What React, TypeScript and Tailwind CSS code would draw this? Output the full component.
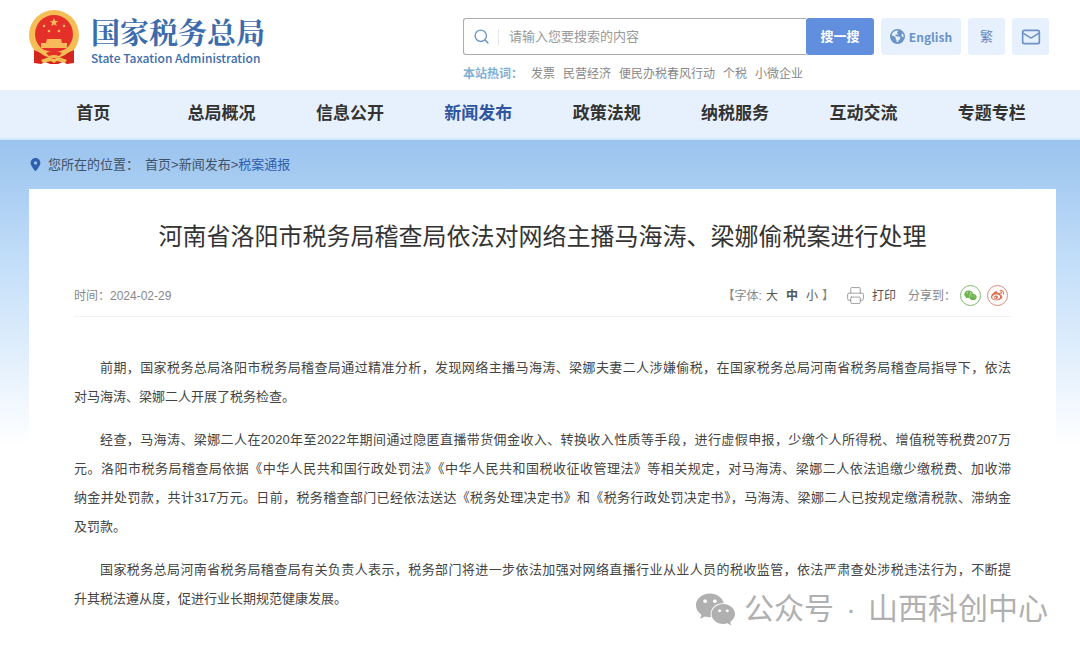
import { FaWeibo, FaWeixin } from "react-icons/fa";
import { FaEarthAmericas, FaLocationDot } from "react-icons/fa6";
import { Mail, Printer, Search } from "lucide-react";

const navItems = ["首页", "总局概况", "信息公开", "新闻发布", "政策法规", "纳税服务", "互动交流", "专题专栏"];

const hotWords = ["发票", "民营经济", "便民办税春风行动", "个税", "小微企业"];

const paragraphs = [
  [
    "前期，国家税务总局洛阳市税务局稽查局通过精准分析，发现网络主播马海涛、梁娜夫妻二人涉嫌偷税，在国家税务总局河南省税务局稽查局指导下，依法",
    "对马海涛、梁娜二人开展了税务检查。",
  ],
  [
    "经查，马海涛、梁娜二人在2020年至2022年期间通过隐匿直播带货佣金收入、转换收入性质等手段，进行虚假申报，少缴个人所得税、增值税等税费207万",
    "元。洛阳市税务局稽查局依据《中华人民共和国行政处罚法》《中华人民共和国税收征收管理法》等相关规定，对马海涛、梁娜二人依法追缴少缴税费、加收滞",
    "纳金并处罚款，共计317万元。日前，税务稽查部门已经依法送达《税务处理决定书》和《税务行政处罚决定书》，马海涛、梁娜二人已按规定缴清税款、滞纳金",
    "及罚款。",
  ],
  [
    "国家税务总局河南省税务局稽查局有关负责人表示，税务部门将进一步依法加强对网络直播行业从业人员的税收监管，依法严肃查处涉税违法行为，不断提",
    "升其税法遵从度，促进行业长期规范健康发展。",
  ],
];

function Emblem() {
  return (
    <svg viewBox="0 0 50 54" className="h-[54px] w-[50px] shrink-0" aria-hidden="true">
      <circle cx="25" cy="25" r="25" fill="#f5bd55" />
      <path d="M5 40l9 4h22l9-4v13l-7 1-4-2-5 2h-8l-5-2-4 2-7-1z" fill="#d3261f" />
      <circle cx="25" cy="24" r="19" fill="#e5302a" />
      <path d="M25 8l1.2 2.9 3.1.2-2.4 2 .8 3-2.7-1.7-2.7 1.7.8-3-2.4-2 3.1-.2z" fill="#f7b95a" />
      <g fill="#f7b95a">
        <circle cx="15" cy="16" r="1.3" />
        <circle cx="35" cy="16" r="1.3" />
        <circle cx="20" cy="21" r="1.3" />
        <circle cx="30" cy="21" r="1.3" />
        <path d="M18 29h14l1 4h5v5H12v-5h5z" />
      </g>
      <path d="M7 35q9 7 18 7t18-7l-3 7q-7 6-15 6t-15-6z" fill="#f5bd55" />
      <path d="M17 43q8-4 16 0l-3 3q-5-2-10 0z" fill="#e5302a" />
      <path d="M12 50l8-3 5 2 5-2 8 3-2 3-8-2-3 2-3-2-8 2z" fill="#f5bd55" />
    </svg>
  );
}

function Header() {
  return (
    <header className="flex h-[90px] items-start justify-between pr-[31px] pl-[29px]">
      <a href="#" className="flex items-start gap-3 pt-[10px] text-[#3c6cad]">
        <Emblem />
        <span className="flex flex-col pt-1">
          <span className="font-['Noto_Serif_CJK_SC','Noto_Sans_CJK_SC',serif] text-[29px] leading-9 font-bold">国家税务总局</span>
          <span className="font-['Noto_Sans_CJK_SC',sans-serif] text-[12px] leading-4 font-medium">State Taxation Administration</span>
        </span>
      </a>

      <div className="pt-[18px]">
        <div className="flex gap-[7px]">
          <form className="flex h-[37px]" onSubmit={(e) => e.preventDefault()}>
            <label className="flex w-[343px] items-center rounded-l-[3px] border border-r-0 border-[#a9adb2] pl-[9px]">
              <Search size={17} strokeWidth={2} className="text-[#6c9ac8]" />
              <span className="ml-2 h-4 w-px bg-[#e4e8ec]" />
              <input
                type="text"
                aria-label="搜索"
                placeholder="请输入您要搜索的内容"
                className="min-w-0 flex-1 pl-[10px] text-[13px] outline-none placeholder:text-[#999]"
              />
            </label>
            <button type="submit" className="w-[68px] rounded-[3px] bg-[#628fdd] text-[13px] font-bold text-white">
              搜一搜
            </button>
          </form>
          <a
            href="#"
            className="flex h-[37px] w-[80px] items-center justify-center gap-1 rounded-[3px] bg-[#e7f1fd] font-['Noto_Sans_CJK_SC',sans-serif] text-[12px] font-bold text-[#6a93c8]"
          >
            <FaEarthAmericas size={15} />
            English
          </a>
          <a href="#" className="flex h-[37px] w-[37px] items-center justify-center rounded-[3px] bg-[#e7f1fd] text-[13px] text-[#6a87bd]">
            繁
          </a>
          <a href="#" aria-label="邮箱" className="flex h-[37px] w-[37px] items-center justify-center rounded-[3px] bg-[#e7f1fd] text-[#6f92c4]">
            <Mail size={20} />
          </a>
        </div>
        <div className="mt-[9px] flex gap-2 text-[12px] leading-5 text-[#888]">
          <span className="font-bold text-[#7fb0d6]">本站热词：</span>
          {hotWords.map((word) => (
            <a href="#" key={word}>{word}</a>
          ))}
        </div>
      </div>
    </header>
  );
}

function ArticleMeta() {
  return (
    <div className="flex h-[42px] items-center justify-between border-b border-[#f2f2f2] pr-[3px] text-[12px] text-[#888]">
      <span>时间：2024-02-29</span>
      <div className="flex items-center">
        <div className="flex items-center">
          <span className="mr-1">【字体:</span>
          <div className="flex gap-2 text-[#555]">
            <button>大</button>
            <button className="font-bold">中</button>
            <button>小</button>
          </div>
          <span className="ml-1">】</span>
        </div>
        <button className="ml-3 flex items-center gap-[7px] text-[#555]">
          <Printer size={19} strokeWidth={1} className="text-[#888]" />
          打印
        </button>
        <span className="mr-1 ml-3">分享到：</span>
        <a href="#" aria-label="微信" className="flex size-[21px] items-center justify-center rounded-full border border-[#7fb96a] text-[#6cb34d]">
          <FaWeixin size={13} />
        </a>
        <a href="#" aria-label="微博" className="ml-1.5 flex size-[21px] items-center justify-center rounded-full border border-[#dd8a7a] text-[#e07058]">
          <FaWeibo size={13} />
        </a>
      </div>
    </div>
  );
}

export default function App() {
  return (
    <div lang="zh-CN" className="relative min-h-screen bg-white font-['Liberation_Sans','Noto_Sans_CJK_SC',sans-serif]">
      <Header />

      <nav className="border-b-2 border-[#d3e8fb] bg-[#e7f1fd] pr-6 pl-[29px]">
        <ul className="grid h-[48px] grid-cols-8 items-center text-center text-[17px] font-bold text-[#333]">
          {navItems.map((item) => (
            <li key={item}>
              <a href="#" className={item === "新闻发布" ? "text-[#2f55a0]" : ""}>{item}</a>
            </li>
          ))}
        </ul>
      </nav>

      <div className="bg-linear-to-b from-[#9ac3ee] via-[#c4dff9] via-25% to-white to-60% pr-6 pl-[29px]">
        {/* Breadcrumb */}
        <div className="flex h-[49px] items-center text-[13px] text-[#3f5268]">
          <FaLocationDot size={13} className="mr-[6px] text-[#2f5fae]" />
          <span className="mr-1.5">您所在的位置：</span>
          <a href="#">首页</a>&gt;
          <a href="#">新闻发布</a>&gt;
          <a href="#" className="text-[#2f5fae]">税案通报</a>
        </div>

        {/* Article */}
        <main className="bg-white px-[45px] pt-7 pb-9">
          <h1 className="text-center text-[24px] leading-10 text-[#333]">
            河南省洛阳市税务局稽查局依法对网络主播马海涛、梁娜偷税案进行处理
          </h1>
          <div className="mt-[18px]">
            <ArticleMeta />
          </div>
          <article className="mt-9 flex flex-col gap-[14px] text-[13px] leading-[29px] text-[#444]">
            {paragraphs.map((lines) => (
              <p key={lines[0]}>
                {lines.map((line, i) => (
                  <span
                    key={line}
                    className={`block ${i === 0 ? "indent-[2em]" : ""} ${i < lines.length - 1 ? "text-justify [text-align-last:justify]" : ""}`}
                  >
                    {line}
                  </span>
                ))}
              </p>
            ))}
          </article>
        </main>
      </div>

      {/* Account mark over the article's corner */}
      <div className="absolute top-[587px] right-8 flex items-center gap-2 text-[30px] leading-[44px] text-[#b0b0b0]">
        <FaWeixin size={41} />
        <div className="flex gap-3">
          <span>公众号</span>
          <span>·</span>
          <span>山西科创中心</span>
        </div>
      </div>
    </div>
  );
}
